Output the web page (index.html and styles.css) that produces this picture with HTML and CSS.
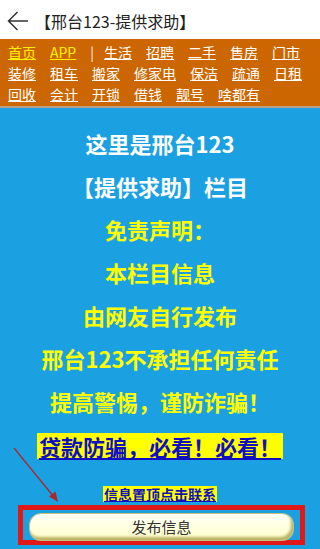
FILE: index.html
```html
<!DOCTYPE html>
<html lang="zh-CN">
<head>
<meta charset="utf-8">
<title>邢台123-提供求助</title>
<link rel="stylesheet" href="styles.css">
</head>
<body>
<header class="topbar">
  <svg class="back" width="22" height="20" viewBox="0 0 22 20"><path d="M21 10H1.5M10.5 1L1.5 10L10.5 19" fill="none" stroke="#333" stroke-width="1.5"/></svg>
  <span class="title">【邢台123-提供求助】</span>
</header>
<nav class="nav">
  <div class="row"><a class="hl" href="#">首页</a><a class="hl" href="#">APP</a><span class="sep">|</span><a href="#">生活</a><a href="#">招聘</a><a href="#">二手</a><a href="#">售房</a><a href="#">门市</a></div>
  <div class="row"><a href="#">装修</a><a href="#">租车</a><a href="#">搬家</a><a href="#">修家电</a><a href="#">保洁</a><a href="#">疏通</a><a href="#">日租</a></div>
  <div class="row"><a href="#">回收</a><a href="#">会计</a><a href="#">开锁</a><a href="#">借钱</a><a href="#">靓号</a><a href="#">啥都有</a></div>
</nav>
<main class="main">
  <p class="white">这里是邢台123</p>
  <p class="white">【提供求助】栏目</p>
  <p class="yellow">免责声明：</p>
  <p class="yellow">本栏目信息</p>
  <p class="yellow">由网友自行发布</p>
  <p class="yellow">邢台123不承担任何责任</p>
  <p class="yellow">提高警惕，谨防诈骗！</p>
  <p class="warn"><a href="#" class="mark">贷款防骗，必看！必看！</a></p>
  <div class="contact"><a href="#" class="mark small">信息置顶点击联系</a></div>
  <div class="redbox"><div class="btn">发布信息</div></div>
</main>
<svg class="pointer" width="70" height="70" viewBox="0 0 70 70"><line x1="14" y1="8" x2="54" y2="57" stroke="#A8282C" stroke-width="1.3"/><path d="M58 62L49 56.5L55.5 51.5Z" fill="#A8282C"/></svg>
</body>
</html>
```
FILE: styles.css
```css
html, body {
  margin: 0;
  padding: 0;
}
body {
  position: relative;
  min-height: 549px;
  background: #1BA1E2;
  font-family: "Noto Sans CJK SC", "Noto Sans", sans-serif;
}
.topbar {
  height: 37px;
  padding-top: 2px;
  background: #fff;
  display: flex;
  align-items: center;
  padding-left: 7px;
}
.back {
  display: block;
  margin-right: 6px;
}
.title {
  font-size: 16px;
  color: #222;
}
.nav {
  background: #CC6600;
  padding: 3px 0 1px 8px;
  border-bottom: 2px solid #B9A088;
}
.row {
  line-height: 21px;
  font-size: 14px;
  white-space: nowrap;
}
.row a {
  color: #fff;
  text-decoration: underline;
  margin-right: 14px;
}
.row a.hl {
  color: #FFF200;
}
.sep {
  color: #eee;
  margin-right: 10px;
}
.main {
  padding-top: 14px;
  text-align: center;
}
.main p {
  margin: 0;
  font-size: 22px;
  font-weight: bold;
  line-height: 43px;
}
.white { color: #fff; }
.yellow { color: #FFFF00; }
.main p.warn {
  line-height: 26px;
  padding: 10px 0 4px;
}
.mark {
  display: inline-block;
  background: #FFFF00;
  color: #1010C0;
  text-decoration: underline;
  line-height: 26px;
  padding: 0 2px;
}
.contact {
  margin-top: 22px;
  line-height: 16px;
}
.mark.small {
  font-size: 14px;
  font-weight: bold;
  line-height: 16px;
  padding: 0 1px;
}
.redbox {
  box-sizing: border-box;
  width: 287px;
  margin: 3px 0 0 18px;
  border: 5px solid #E01818;
  padding: 4px 7px 0 7px;
}
.btn {
  height: 26px;
  line-height: 26px;
  border-radius: 11px;
  background: linear-gradient(#FFFFF4, #FFFFCC);
  box-shadow: inset -2px -3px 3px #B8B060, 0 0 0 1px #C8C080;
  font-size: 15px;
  color: #333;
  text-align: center;
}
.pointer {
  position: absolute;
  left: 0;
  top: 440px;
}
```
